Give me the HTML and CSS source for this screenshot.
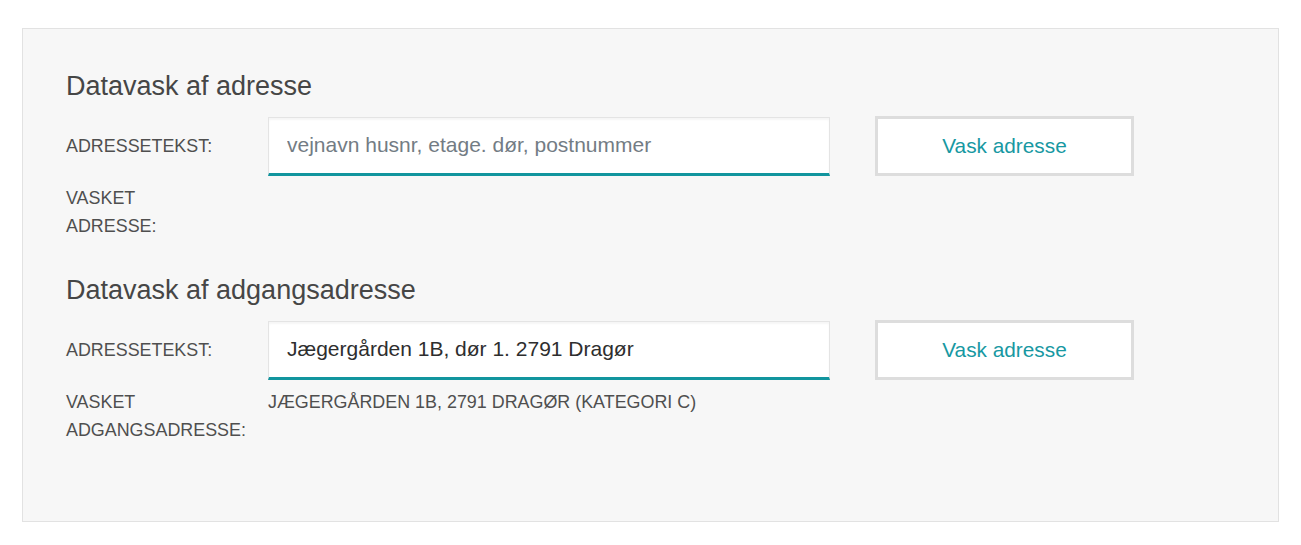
FILE: index.html
```html
<!DOCTYPE html>
<html lang="da">
<head>
<meta charset="utf-8">
<title>Datavask</title>
<link rel="stylesheet" href="styles.css">
</head>
<body>
<div class="panel">
  <section class="block">
    <h2 class="title">Datavask af adresse</h2>
    <div class="form-row">
      <label class="label" for="a1">ADRESSETEKST:</label>
      <input class="field" id="a1" type="text" placeholder="vejnavn husnr, etage. dør, postnummer">
      <button class="btn" type="button">Vask adresse</button>
    </div>
    <div class="result-row">
      <div class="label">VASKET<br>ADRESSE:</div>
      <div class="value"></div>
    </div>
  </section>
  <section class="block second">
    <h2 class="title">Datavask af adgangsadresse</h2>
    <div class="form-row">
      <label class="label" for="a2">ADRESSETEKST:</label>
      <input class="field" id="a2" type="text" value="Jægergården 1B, dør 1. 2791 Dragør">
      <button class="btn" type="button">Vask adresse</button>
    </div>
    <div class="result-row">
      <div class="label">VASKET<br>ADGANGSADRESSE:</div>
      <div class="value">JÆGERGÅRDEN 1B, 2791 DRAGØR (KATEGORI C)</div>
    </div>
  </section>
</div>
</body>
</html>
```

FILE: styles.css
```css
* { box-sizing: border-box; }

html, body {
  background: #ffffff;
}

body {
  margin: 28px 22px 0 22px;
  font-family: "Liberation Sans", Arial, sans-serif;
  color: #444;
}

.panel {
  background: #f7f7f7;
  border: 1px solid #e2e2e2;
  padding: 41px 43px 76px 43px;
  height: 494px;
}

.block.second {
  margin-top: 34px;
}

.title {
  margin: 0 0 14px 0;
  font-size: 27px;
  line-height: 32px;
  font-weight: normal;
  color: #464646;
}

.form-row {
  display: flex;
  align-items: center;
  height: 60px;
}

.label {
  width: 202px;
  flex: none;
  font-size: 17.9px;
  line-height: 28px;
  color: #4f4f4f;
}

.field {
  width: 562px;
  height: 59px;
  flex: none;
  border: 1px solid #e4e4e4;
  border-bottom: 3px solid #12959e;
  background: #ffffff;
  box-shadow: inset 0 2px 2px rgba(0, 0, 0, 0.04);
  padding: 0 18px;
  font-family: "Liberation Sans", Arial, sans-serif;
  font-size: 21px;
  color: #2e2e2e;
  outline: none;
  border-radius: 0;
}

.field::placeholder {
  color: #737c84;
  opacity: 1;
}

.btn {
  margin-left: 45px;
  width: 259px;
  height: 60px;
  flex: none;
  background: #ffffff;
  border: 3px solid #dddddd;
  font-family: "Liberation Sans", Arial, sans-serif;
  font-size: 20.8px;
  color: #1798a2;
  padding: 0;
  cursor: pointer;
  border-radius: 0;
}

.result-row {
  display: flex;
  margin-top: 8px;
  min-height: 56px;
}

.value {
  font-size: 17.9px;
  line-height: 28px;
  color: #4f4f4f;
}
```
